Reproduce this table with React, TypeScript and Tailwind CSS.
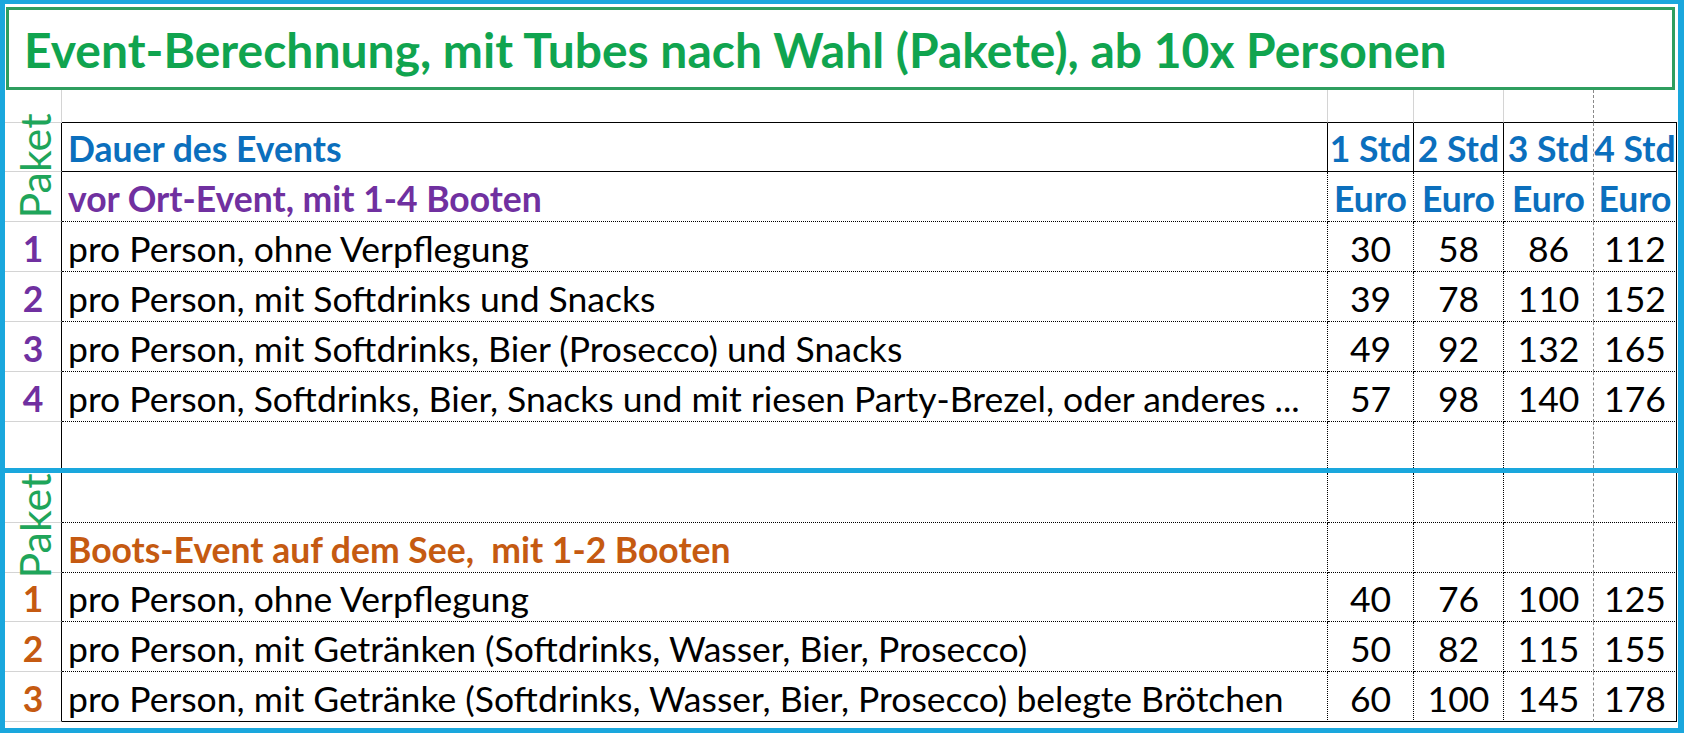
type Line = 'none' | 'gray' | 'black' | 'dot' | 'dash';

const RIGHT: Record<Line, string> = {
  none: '',
  gray: '[border-right:1px_solid_#d4d4d4]',
  black: '[border-right:1px_solid_#000]',
  dot: '[border-right:1px_dotted_#000]',
  dash: '[border-right:1px_dashed_#8a8a8a]',
};

const BOTTOM: Record<Line, string> = {
  none: '',
  gray: '[border-bottom:1px_solid_#d4d4d4]',
  black: '[border-bottom:1px_solid_#000]',
  dot: '[border-bottom:1px_dotted_#000]',
  dash: '[border-bottom:1px_dashed_#8a8a8a]',
};

const HEIGHT: Record<number, string> = {
  33: 'h-[33px]',
  46: 'h-[46px]',
  49: 'h-[49px]',
  50: 'h-[50px]',
};

type Row = {
  h: number;
  kind: 'top' | 'head' | 'body' | 'gap' | 'last';
  nr?: string;
  nrColor?: string;
  label?: string;
  labelClass?: string;
  cells?: string[];
  cellClass?: string;
};

const purple = 'text-[#7030a0]';
const orange = 'text-[#c55a11]';
const blue = 'text-[#0b6fbd]';

const section1: Row[] = [
  { h: 33, kind: 'top' },
  {
    h: 49,
    kind: 'head',
    label: 'Dauer des Events',
    labelClass: `font-bold ${blue}`,
    cells: ['1 Std', '2 Std', '3 Std', '4 Std'],
    cellClass: `font-bold ${blue}`,
  },
  {
    h: 50,
    kind: 'body',
    label: 'vor Ort-Event, mit 1-4 Booten',
    labelClass: `font-bold ${purple}`,
    cells: ['Euro', 'Euro', 'Euro', 'Euro'],
    cellClass: `font-bold ${blue}`,
  },
  { h: 50, kind: 'body', nr: '1', nrColor: purple, label: 'pro Person, ohne Verpflegung', cells: ['30', '58', '86', '112'] },
  { h: 50, kind: 'body', nr: '2', nrColor: purple, label: 'pro Person, mit Softdrinks und Snacks', cells: ['39', '78', '110', '152'] },
  { h: 50, kind: 'body', nr: '3', nrColor: purple, label: 'pro Person, mit Softdrinks, Bier (Prosecco) und Snacks', cells: ['49', '92', '132', '165'] },
  {
    h: 50,
    kind: 'body',
    nr: '4',
    nrColor: purple,
    label: 'pro Person, Softdrinks, Bier, Snacks und mit riesen Party-Brezel, oder anderes ...',
    cells: ['57', '98', '140', '176'],
  },
  { h: 46, kind: 'gap' },
];

const section2: Row[] = [
  { h: 50, kind: 'body' },
  { h: 50, kind: 'body', label: 'Boots-Event auf dem See,  mit 1-2 Booten', labelClass: `font-bold ${orange}` },
  { h: 49, kind: 'body', nr: '1', nrColor: orange, label: 'pro Person, ohne Verpflegung', cells: ['40', '76', '100', '125'] },
  {
    h: 50,
    kind: 'body',
    nr: '2',
    nrColor: orange,
    label: 'pro Person, mit Getränken (Softdrinks, Wasser, Bier, Prosecco)',
    cells: ['50', '82', '115', '155'],
  },
  {
    h: 50,
    kind: 'last',
    nr: '3',
    nrColor: orange,
    label: 'pro Person, mit Getränke (Softdrinks, Wasser, Bier, Prosecco) belegte Brötchen',
    cells: ['60', '100', '145', '178'],
  },
];

function bottomLine(kind: Row['kind']): Line {
  if (kind === 'top' || kind === 'head' || kind === 'last') return 'black';
  if (kind === 'gap') return 'none';
  return 'dot';
}

function TableRow({ row }: { row: Row }) {
  const h = HEIGHT[row.h];
  const b = BOTTOM[bottomLine(row.kind)];
  const inner = row.kind === 'top' ? 'gray' : row.kind === 'head' ? 'black' : 'dot';
  const base = `${h} flex items-end pb-[5px] leading-none whitespace-nowrap`;

  return (
    <>
      <div
        className={`${base} justify-center font-bold ${row.nrColor ?? ''} ${row.kind === 'top' ? RIGHT.gray : RIGHT.black} ${
          row.kind === 'gap' ? '' : BOTTOM.gray
        }`}
      >
        {row.nr}
      </div>
      <div className={`${base} pl-[6px] whitespace-pre ${row.labelClass ?? 'text-black'} ${RIGHT[inner]} ${b}`}>
        {row.label}
      </div>
      {[0, 1, 2, 3].map((i) => {
        let r: Line = inner;
        if (i === 2) r = 'dash';
        if (i === 3) r = row.kind === 'top' ? 'none' : 'black';
        return (
          <div key={i} className={`${base} justify-center ${row.cellClass ?? 'text-black'} ${RIGHT[r]} ${b}`}>
            {row.cells?.[i]}
          </div>
        );
      })}
    </>
  );
}

const cols = 'grid grid-cols-[57px_1266px_86px_90px_90px_83px]';

export default function App() {
  return (
    <div className="relative w-[1684px] h-[733px] overflow-hidden bg-white border-l-[5px] border-t-[4px] border-r-[6px] border-b-[5px] border-[#1aa7dd] [font-family:Lato,'Liberation_Sans',sans-serif] text-[35.5px]">
      <div className="ml-px mt-[3px] w-[1669px] h-[83px] border-[3px] border-[#2f9e5f] flex items-center pl-[15px]">
        <h1 className="mt-[3px] text-[48px] leading-none font-bold text-[#10a44f] whitespace-nowrap">
          Event-Berechnung, mit Tubes nach Wahl (Pakete), ab 10x Personen
        </h1>
      </div>

      <div className={cols}>
        {section1.map((row, i) => (
          <TableRow key={i} row={row} />
        ))}
      </div>

      <div className="h-[5px] w-full bg-[#1aa7dd]" />

      <div className={cols}>
        {section2.map((row, i) => (
          <TableRow key={i} row={row} />
        ))}
      </div>

      <span className="absolute left-[29px] top-[162px] -translate-x-1/2 -translate-y-1/2 -rotate-90 whitespace-nowrap text-[43px] leading-none text-[#1fa55a]">
        Paket
      </span>
      <span className="absolute left-[29px] top-[522px] -translate-x-1/2 -translate-y-1/2 -rotate-90 whitespace-nowrap text-[43px] leading-none text-[#1fa55a]">
        Paket
      </span>
    </div>
  );
}
